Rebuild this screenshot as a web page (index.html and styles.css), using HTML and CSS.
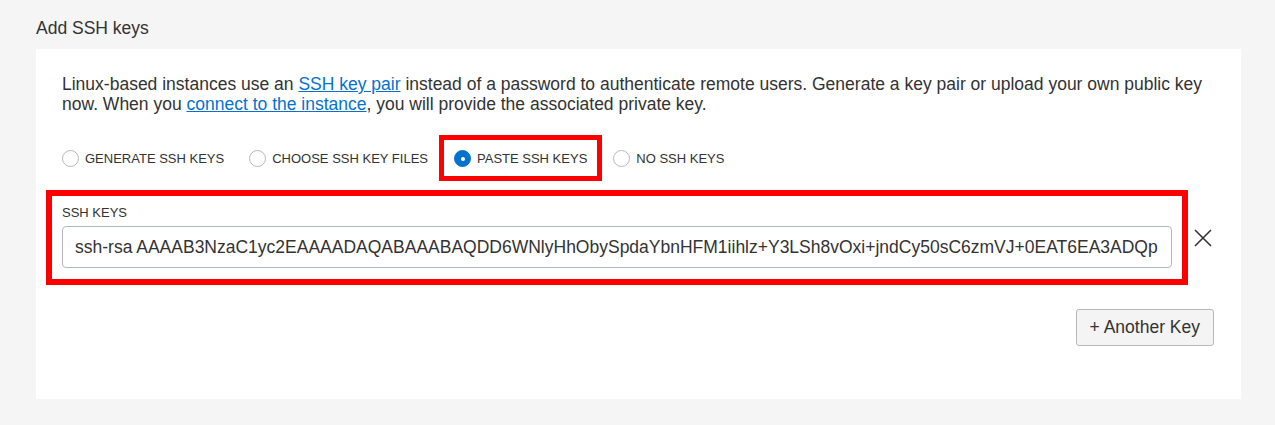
FILE: index.html
```html
<!DOCTYPE html>
<html lang="en">
<head>
<meta charset="utf-8">
<title>Add SSH keys</title>
<link rel="stylesheet" href="styles.css">
</head>
<body>
<div class="page">
  <h2 class="section-title">Add SSH keys</h2>
  <div class="card">
    <p class="intro">Linux-based instances use an <a href="#">SSH key pair</a> instead of a password to authenticate remote users. Generate a key pair or upload your own public key now. When you <a href="#">connect to the instance</a>, you will provide the associated private key.</p>
    <div class="radios">
      <label class="radio"><span class="circle"></span><span class="radio-text">GENERATE SSH KEYS</span></label>
      <label class="radio"><span class="circle"></span><span class="radio-text">CHOOSE SSH KEY FILES</span></label>
      <label class="radio radio-highlight"><span class="circle checked"></span><span class="radio-text">PASTE SSH KEYS</span></label>
      <label class="radio"><span class="circle"></span><span class="radio-text">NO SSH KEYS</span></label>
    </div>
    <div class="key-row">
      <div class="key-field">
        <div class="field-label">SSH KEYS</div>
        <div class="key-input">ssh-rsa AAAAB3NzaC1yc2EAAAADAQABAAABAQDD6WNlyHhObySpdaYbnHFM1iihlz+Y3LSh8vOxi+jndCy50sC6zmVJ+0EAT6EA3ADQp</div>
      </div>
      <button class="remove" aria-label="Remove">
        <svg width="18" height="18" viewBox="0 0 18 18"><path d="M1 1 L17 17 M17 1 L1 17" stroke="#333" stroke-width="1.6" fill="none"/></svg>
      </button>
    </div>
    <div class="actions">
      <button class="btn">+ Another Key</button>
    </div>
  </div>
</div>
</body>
</html>
```
FILE: styles.css
```css
html, body {
  margin: 0;
  padding: 0;
  background: #f5f5f5;
  font-family: "Liberation Sans", Arial, sans-serif;
  color: #333;
}
.page {
  padding: 18px 34px 0 36px;
}
.section-title {
  margin: 0 0 11px 0;
  font-size: 17.5px;
  font-weight: normal;
  line-height: 20px;
  color: #333;
}
.card {
  background: #fff;
  height: 350px;
  box-sizing: border-box;
  padding: 25px 27px 0 26px;
}
.intro {
  margin: 0;
  font-size: 17.5px;
  line-height: 20px;
  color: #333;
}
.intro a {
  color: #0572ce;
  text-decoration: underline;
}
.radios {
  display: flex;
  align-items: center;
  gap: 25px;
  margin-top: 21px;
}
.radio {
  display: flex;
  align-items: center;
  gap: 6px;
  font-size: 13px;
  color: #333;
  height: 36px;
}
.radio-highlight {
  border: 5px solid #ff0000;
  padding: 0 10px;
  margin: 0 -14px;
}
.circle {
  width: 15px;
  height: 15px;
  border: 1px solid #b5b9be;
  border-radius: 50%;
  box-sizing: content-box;
  display: inline-block;
  background: #fff;
  position: relative;
}
.circle.checked {
  background: #0572ce;
  border-color: #0572ce;
}
.circle.checked::after {
  content: "";
  position: absolute;
  left: 6px;
  top: 6px;
  width: 4px;
  height: 4px;
  border-radius: 50%;
  background: #fff;
}
.key-row {
  display: flex;
  align-items: center;
  margin-top: 9px;
  margin-left: -16px;
}
.key-field {
  width: 1142px;
  box-sizing: border-box;
  border: 6px solid #ff0000;
  padding: 10px 10px 11px 10px;
}
.field-label {
  font-size: 13px;
  line-height: 14px;
  color: #333;
  margin-bottom: 6px;
}
.key-input {
  height: 42px;
  box-sizing: border-box;
  border: 1px solid #b3b8bd;
  border-radius: 4px;
  padding: 0 12px;
  font-size: 17.5px;
  line-height: 40px;
  white-space: nowrap;
  overflow: hidden;
  color: #333;
}
.remove {
  background: none;
  border: 0;
  padding: 0;
  margin-left: 6px;
  display: flex;
  align-items: center;
  cursor: pointer;
}
.actions {
  display: flex;
  justify-content: flex-end;
  margin-top: 24px;
}
.btn {
  height: 37px;
  padding: 0 13px;
  background: #f4f4f4;
  border: 1px solid #b8b8b8;
  border-radius: 3px;
  font-family: "Liberation Sans", Arial, sans-serif;
  font-size: 17.5px;
  color: #333;
}
```
